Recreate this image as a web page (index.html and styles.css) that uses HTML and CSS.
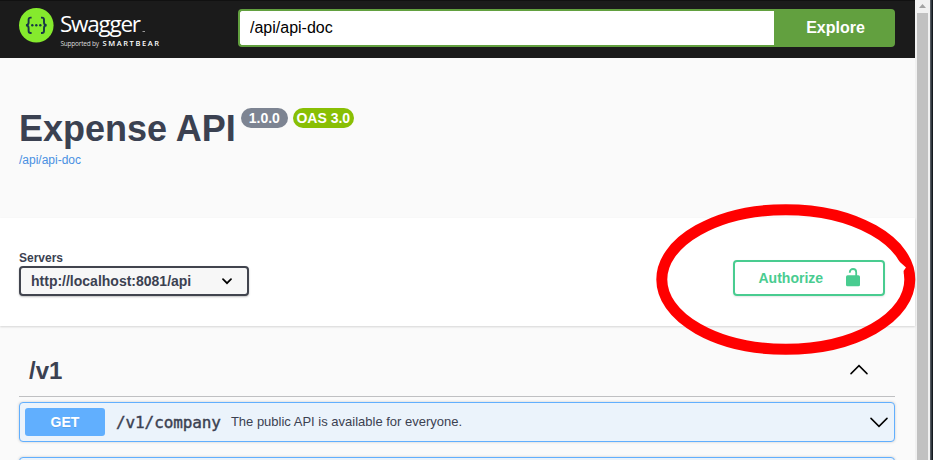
FILE: index.html
```html
<!DOCTYPE html>
<html lang="en">
<head>
<meta charset="utf-8">
<title>Expense API</title>
<link rel="stylesheet" href="styles.css">
</head>
<body>
<div class="window">
  <div class="page">
    <header class="topbar">
      <svg class="logo" width="150" height="48" viewBox="0 0 150 48">
        <circle cx="17.3" cy="21.3" r="17.3" fill="#85ea2d"/>
        <g fill="none" stroke="#173647" stroke-width="1.9">
          <path d="M12.6 13.6h-1q-2 0-2 2v3q0 2.5-2.6 2.7q2.6.2 2.6 2.7v3q0 2 2 2h1"/>
          <path d="M22 13.6h1q2 0 2 2v3q0 2.5 2.6 2.7q-2.6.2-2.6 2.7v3q0 2-2 2h-1"/>
        </g>
        <g fill="#173647"><circle cx="13.3" cy="21.3" r="1.2"/><circle cx="17.3" cy="21.3" r="1.2"/><circle cx="21.3" cy="21.3" r="1.2"/></g>
        <text class="logo-name" x="41" y="28.2" textLength="81">Swagger</text>
        <rect x="123.5" y="27" width="2.5" height="1" fill="#999"/>
        <text class="logo-by" x="41.5" y="42" textLength="38.5">Supported by</text>
        <text class="logo-brand" x="83.5" y="42" textLength="56.5">SMARTBEAR</text>
      </svg>
      <form class="search">
        <input class="search-input" type="text" value="/api/api-doc">
        <button class="search-button" type="button">Explore</button>
      </form>
    </header>
    <section class="info">
      <h1 class="title">Expense API<span class="badge">1.0.0</span><span class="badge oas">OAS 3.0</span></h1>
      <a class="doc-link">/api/api-doc</a>
    </section>
    <section class="schemes">
      <div class="servers">
        <span class="servers-label">Servers</span>
        <div class="select">
          <span>http://localhost:8081/api</span>
          <svg width="10" height="7" viewBox="0 0 10 7"><path d="M1 1.2l4 4 4-4" fill="none" stroke="#000" stroke-width="1.7" stroke-linecap="round"/></svg>
        </div>
      </div>
      <button class="authorize" type="button">
        <span>Authorize</span>
        <svg width="14" height="19" viewBox="0 0 14 19"><rect x="0" y="7.3" width="14" height="11" rx="1.6" fill="#49cc90"/><path d="M3.8 4.8V4.2a3.2 3.2 0 0 1 6.4 0V8" fill="none" stroke="#49cc90" stroke-width="1.8"/></svg>
      </button>
      <svg class="highlight" width="262" height="154" viewBox="0 0 262 154"><ellipse cx="130.8" cy="76.5" rx="124" ry="69.8" fill="none" stroke="#f00" stroke-width="11"/><path d="M236 51l15 13.500-2.500 3.500v2l-5-6z" fill="#fff"/></svg>
    </section>
    <main class="operations">
      <h2 class="tag"><span>/v1</span>
        <svg width="18" height="11" viewBox="0 0 18 11"><path d="M1 9.600L9 1.600l8 8" fill="none" stroke="#000" stroke-width="1.5" stroke-linecap="round"/></svg>
      </h2>
      <div class="operation">
        <span class="method">GET</span>
        <code class="path">/v1/company</code>
        <span class="summary">The public API is available for everyone.</span>
        <svg width="18" height="11" viewBox="0 0 18 11"><path d="M1 1.4l8 8 8-8" fill="none" stroke="#000" stroke-width="1.5" stroke-linecap="round"/></svg>
      </div>
      <div class="operation"></div>
    </main>
  </div>
  <div class="scrollbar">
    <svg width="7" height="4" viewBox="0 0 7 4"><path d="M0 4L3.5 0 7 4z" fill="#a3a3a3"/></svg>
    <div class="thumb"></div>
  </div>
  <div class="edge"></div>
</div>
</body>
</html>
```
FILE: styles.css
```css
* { box-sizing: border-box; }
body {
  margin: 0;
  overflow: hidden;
  font-family: "Liberation Sans", Arial, sans-serif;
  color: #3b4151;
  background: #fafafa;
}
.window { display: flex; height: 460px; overflow: hidden; }
.page { width: 915px; height: 460px; flex: none; }
.topbar {
  display: flex;
  height: 58px;
  padding: 4px 20px 0 19px;
  background: #1b1b1b;
  border-top: 1px solid #111;
}
.logo { flex: none; margin-top: -1px; }
.logo text { fill: #fff; font-family: "Open Sans", sans-serif; }
.logo .logo-name { font-size: 22.5px; }
.logo .logo-by { font-size: 6.5px; fill: #ddd; }
.logo .logo-brand { font-size: 7.5px; font-weight: 600; }
.search { display: flex; width: 657px; height: 38px; margin: 4px 0 0 auto; }
.search-input {
  flex: 1;
  min-width: 0;
  padding: 0 10px;
  border: 2px solid #62a03f;
  border-right: 0;
  border-radius: 4px 0 0 4px;
  outline: 0;
  background: #fff;
  color: #000;
  font: 16px "Liberation Sans", Arial, sans-serif;
}
.search-button {
  width: 121px;
  padding: 0 0 0 2px;
  border: 0;
  border-radius: 0 4px 4px 0;
  background: #62a03f;
  color: #fff;
  font: bold 16px "Liberation Sans", Arial, sans-serif;
}
.info { height: 160px; padding: 50px 19px 0; }
.title { display: flex; margin: 0; height: 41px; font-size: 36px; line-height: 41px; }
.badge {
  height: 20px;
  margin-left: 5px;
  padding: 0 8px;
  border-radius: 20px;
  background: #7d8492;
  color: #fff;
  font-size: 14px;
  line-height: 20px;
}
.badge.oas { padding: 0 3.5px; background: #89bf04; }
.doc-link { display: block; margin-top: 4px; font-size: 12px; line-height: 14px; color: #4990e2; }
.schemes {
  position: relative;
  display: flex;
  justify-content: space-between;
  height: 108px;
  padding: 33px 30px 0 19px;
  background: #fff;
  box-shadow: 0 1px 2px rgba(0, 0, 0, .15);
}
.servers { display: flex; flex-direction: column; font-weight: 700; }
.servers-label { font-size: 12px; line-height: 15px; }
.select {
  display: flex;
  align-items: center;
  justify-content: space-between;
  width: 230px;
  height: 30px;
  padding: 0 15px 0 10px;
  border: 2px solid #41444e;
  border-radius: 4px;
  background: #f7f7f7;
  box-shadow: 0 1px 2px rgba(0, 0, 0, .25);
  font-size: 14px;
}
.authorize {
  display: flex;
  justify-content: space-between;
  align-items: center;
  width: 152px;
  height: 36px;
  margin-top: 9px;
  padding: 0 23px 0 23.5px;
  border: 2px solid #49cc90;
  border-radius: 4px;
  background: transparent;
  box-shadow: 0 1px 2px rgba(0, 0, 0, .1);
  color: #49cc90;
  font: bold 14px "Liberation Sans", Arial, sans-serif;
}
.authorize svg { margin-top: -2px; }
.highlight { position: absolute; left: 655px; top: -15px; z-index: 1; }
.operations { padding: 20px 20px 0 19px; }
.tag {
  display: flex;
  justify-content: space-between;
  align-items: center;
  height: 51px;
  margin: 0 0 5px;
  padding: 0 27px 1px 10px;
  border-bottom: 1px solid #bfc0c2;
  font-size: 24px;
}
.tag svg { margin-top: -2px; }
.operation {
  display: flex;
  align-items: center;
  height: 40px;
  margin-bottom: 15px;
  padding: 0 6px 0 5px;
  border: 1px solid #61affe;
  border-radius: 4px;
  background: #ebf3fb;
  box-shadow: 0 0 3px rgba(0, 0, 0, .19);
}
.method {
  width: 80px;
  height: 28px;
  border-radius: 3px;
  background: #61affe;
  color: #fff;
  font-size: 14px;
  font-weight: 700;
  line-height: 28px;
  text-align: center;
  text-shadow: 0 1px 0 rgba(0, 0, 0, .1);
}
.path {
  margin-left: 11px;
  font: 16px "DejaVu Sans Mono", monospace;
  letter-spacing: -.1px;
  -webkit-text-stroke: .4px #3b4151;
}
.summary { flex: 1; margin: -2px 0 0 10px; font-size: 13px; }
.scrollbar {
  display: flex;
  flex-direction: column;
  align-items: center;
  width: 15px;
  flex: none;
  padding-top: 4px;
  background: #f1f1f1;
}
.thumb { width: 11px; flex: 1; margin-top: 5px; background: #c1c1c1; }
.edge {
  width: 3px;
  flex: none;
  background: linear-gradient(90deg, #555a60 0 1px, #303840 1px 2px, #15191e 2px);
}
```
